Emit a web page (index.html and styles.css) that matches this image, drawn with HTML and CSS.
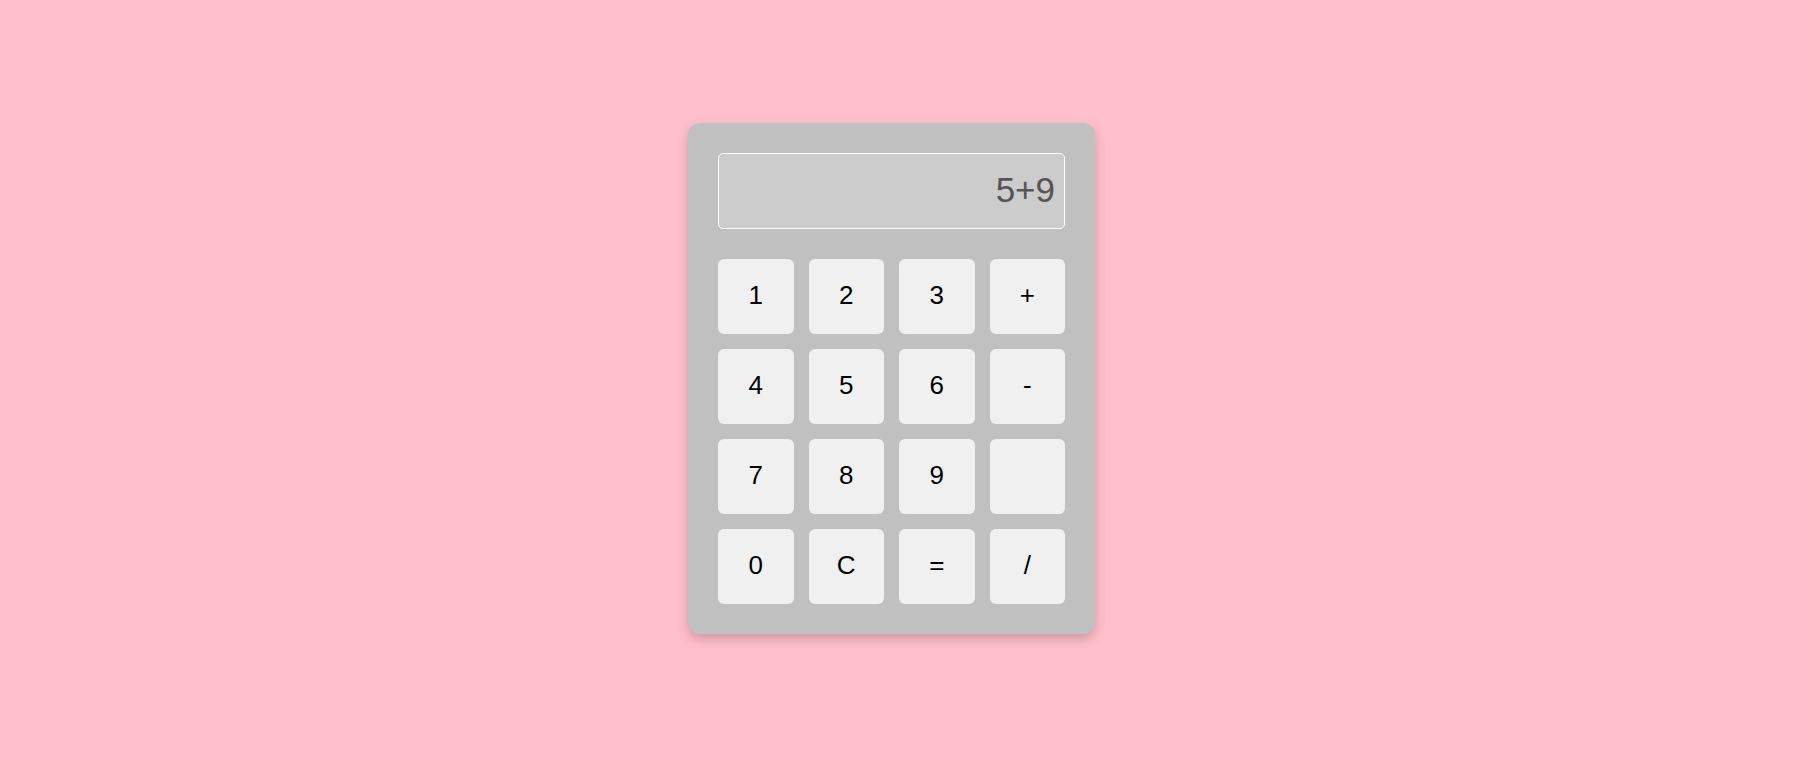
FILE: index.html
```html
<!DOCTYPE html>
<html>
<head>
<meta charset="utf-8">
<link rel="stylesheet" href="styles.css">
</head>
<body>
<div class="page">
  <div class="calculator">
    <div class="display">5+9</div>
    <div class="keys">
      <button class="key">1</button>
      <button class="key">2</button>
      <button class="key">3</button>
      <button class="key">+</button>
      <button class="key">4</button>
      <button class="key">5</button>
      <button class="key">6</button>
      <button class="key">-</button>
      <button class="key">7</button>
      <button class="key">8</button>
      <button class="key">9</button>
      <button class="key"></button>
      <button class="key">0</button>
      <button class="key">C</button>
      <button class="key">=</button>
      <button class="key">/</button>
    </div>
  </div>
</div>
</body>
</html>
```
FILE: styles.css
```css
html, body {
  margin: 0;
  padding: 0;
  height: 100%;
}
body {
  background: #ffc0cb;
  font-family: "Liberation Sans", Arial, sans-serif;
}
.page {
  height: 100%;
  display: flex;
  align-items: center;
  justify-content: center;
  padding-right: 27px;
  box-sizing: border-box;
}
.calculator {
  width: 347px;
  padding: 30px;
  background: #c0c0c0;
  border-radius: 12px;
  box-shadow: 0 5px 12px rgba(0, 0, 0, 0.2);
}
.display {
  box-sizing: border-box;
  height: 76px;
  border: 1px solid #ffffff;
  border-radius: 5px;
  background: #cccccc;
  color: #555555;
  font-size: 35px;
  line-height: 72px;
  text-align: right;
  padding-right: 9px;
  margin-bottom: 30px;
}
.keys {
  display: grid;
  grid-template-columns: repeat(4, 1fr);
  gap: 15px;
}
.key {
  height: 75px;
  border: none;
  border-radius: 6px;
  background: #f0f0f0;
  color: #000000;
  font-family: "Liberation Sans", Arial, sans-serif;
  font-size: 26px;
  padding: 0 0 2px 0;
}
```
